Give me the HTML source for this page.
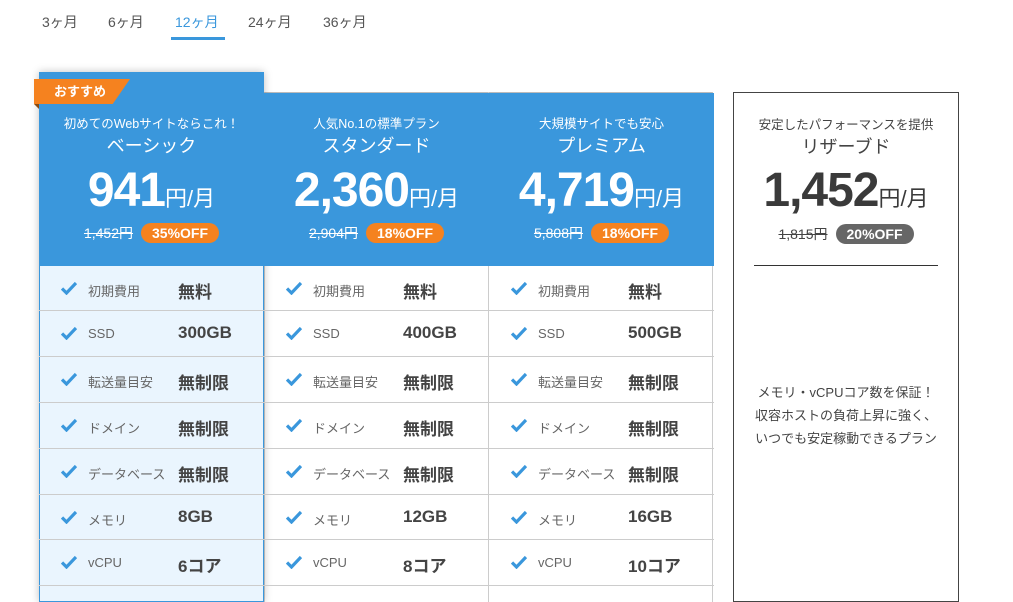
<!DOCTYPE html>
<html><head><meta charset="utf-8"><style>
*{margin:0;padding:0;box-sizing:border-box}
body{width:1013px;height:597px;overflow:hidden;background:#fff;font-family:"Liberation Sans","Noto Sans CJK JP",sans-serif;color:#444;position:relative}
.tab{position:absolute;top:12px;font-size:14px;color:#555}
.card{position:absolute;width:225px;text-align:center}
.head{background:#3a97dc;color:#fff;position:relative}
.sub{position:absolute;left:0;right:0;font-size:12.5px}
.name{position:absolute;left:0;right:0;font-size:18px}
.price{position:absolute;left:0;right:0;font-size:48px;font-weight:bold;letter-spacing:-1px}
.price span{font-size:22px;font-weight:normal;letter-spacing:0}
.old{position:absolute;left:0;right:0;font-size:14px}
.old s{margin-right:8px}
.off{display:inline-block;background:#f5821f;color:#fff;font-weight:bold;border-radius:12px;padding:2px 11px;font-size:14px}
.row{position:absolute;left:0;width:225px;height:46px;border-bottom:1px solid #ccc;text-align:left}
.row svg{position:absolute;left:22px;top:15px}
.row .l{position:absolute;left:49px;top:15px;font-size:13px;color:#666}
.row .v{position:absolute;left:139px;top:12px;font-size:17px;font-weight:bold;color:#444}
</style></head><body>
<div class="tab" style="left:42px">3ヶ月</div>
<div class="tab" style="left:108px">6ヶ月</div>
<div class="tab" style="left:175px;color:#3a97dc">12ヶ月</div>
<div style="position:absolute;left:171px;top:37px;width:54px;height:3px;background:#3a97dc"></div>
<div class="tab" style="left:248px">24ヶ月</div>
<div class="tab" style="left:323px">36ヶ月</div>

<!-- cards rows backgrounds -->
<div style="position:absolute;left:264px;top:92px;width:449px;height:510px;border-left:1px solid #ccc;border-right:1px solid #ccc;border-top:1px solid #bbb"></div>
<div style="position:absolute;left:488px;top:92px;width:1px;height:510px;background:#ccc"></div>
<div style="position:absolute;left:39px;top:72px;width:225px;height:530px;background:#eaf5fe;border:1px solid #3a97dc;box-shadow:0 0 8px rgba(0,0,0,.25)"></div>

<div id="c"></div>
<script>
var plans=[
{x:39,top:72,sub:"初めてのWebサイトならこれ！",name:"ベーシック",p:"941",o:"1,452円",off:"35%OFF",v:["300GB","8GB","6コア"]},
{x:264,top:93,sub:"人気No.1の標準プラン",name:"スタンダード",p:"2,360",o:"2,904円",off:"18%OFF",v:["400GB","12GB","8コア"]},
{x:489,top:93,sub:"大規模サイトでも安心",name:"プレミアム",p:"4,719",o:"5,808円",off:"18%OFF",v:["500GB","16GB","10コア"]}];
var chk='<svg width="16" height="14" viewBox="0 0 16 14"><path d="M1 7.5l4.5 4.5L15 2" stroke="#3a97dc" stroke-width="3.2" fill="none"/></svg>';
var h="";
plans.forEach(function(p){
 var ht=266-p.top;
 h+='<div class="card" style="left:'+p.x+'px;top:'+p.top+'px"><div class="head" style="height:'+ht+'px">'+
 '<div class="sub" style="top:'+(113-p.top)+'px">'+p.sub+'</div>'+
 '<div class="name" style="top:'+(132-p.top)+'px">'+p.name+'</div>'+
 '<div class="price" style="top:'+(163-p.top)+'px">'+p.p+'<span>円/月</span></div>'+
 '<div class="old" style="top:'+(223-p.top)+'px"><s>'+p.o+'</s><span class="off">'+p.off+'</span></div></div></div>';
 var labels=["初期費用","SSD","転送量目安","ドメイン","データベース","メモリ","vCPU"];
 var vals=["無料",p.v[0],"無制限","無制限","無制限",p.v[1],p.v[2]];
 var tops=[266,311,357,403,449,495,540];
 for(var i=0;i<7;i++){
  h+='<div class="row" style="left:'+p.x+'px;top:'+tops[i]+'px;height:'+((i<6?tops[i+1]:586)-tops[i])+'px">'+chk+'<span class="l">'+labels[i]+'</span><span class="v">'+vals[i]+'</span></div>';
 }
});
document.getElementById("c").innerHTML=h;
</script>

<!-- badge -->
<div style="position:absolute;left:34px;top:79px;width:96px;height:25px;background:#f5821f;clip-path:polygon(0 0,100% 0,82% 100%,0 100%);color:#fff;font-weight:bold;font-size:13px;line-height:25px;padding-left:20px">おすすめ</div>
<div style="position:absolute;left:34px;top:104px;width:0;height:0;border-top:5px solid #8a4a10;border-left:5px solid transparent"></div>

<!-- reserved -->
<div style="position:absolute;left:733px;top:92px;width:226px;height:510px;border:1px solid #444;text-align:center;color:#444">
 <div style="position:absolute;left:0;right:0;top:21px;font-size:12.5px">安定したパフォーマンスを提供</div>
 <div style="position:absolute;left:0;right:0;top:40px;font-size:18px">リザーブド</div>
 <div style="position:absolute;left:0;right:0;top:70px;font-size:48px;font-weight:bold;letter-spacing:-1px;color:#3a3a3a">1,452<span style="font-size:22px;font-weight:normal;letter-spacing:0">円/月</span></div>
 <div style="position:absolute;left:0;right:0;top:131px;font-size:14px"><s style="margin-right:8px">1,815円</s><span style="display:inline-block;background:#666;color:#fff;font-weight:bold;border-radius:12px;padding:2px 11px">20%OFF</span></div>
 <div style="position:absolute;left:20px;right:20px;top:172px;height:1px;background:#333"></div>
 <div style="position:absolute;left:18px;right:18px;top:288px;font-size:13px;line-height:23px">メモリ・vCPUコア数を保証！収容ホストの負荷上昇に強く、いつでも安定稼動できるプラン</div>
</div>
</body></html>
